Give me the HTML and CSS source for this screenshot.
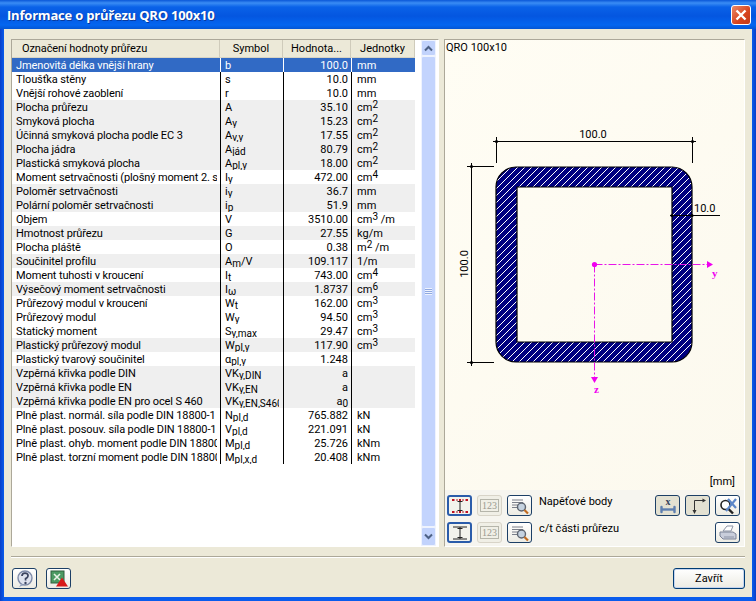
FILE: index.html
```html
<!DOCTYPE html>
<html lang="cs">
<head>
    <meta charset="UTF-8">
    <title>Informace o průřezu QRO 100x10</title>
    <link rel="stylesheet" href="styles.css">
</head>
<body>

<div class="window">
    <!-- Title bar -->
    <div class="titlebar">
        <span class="title">Informace o průřezu QRO 100x10</span>
        <span class="close">
            <svg width="12" height="12" viewBox="0 0 12 12"><path d="M1.5 1.5 L10.5 10.5 M10.5 1.5 L1.5 10.5" stroke="#fff" stroke-width="2.4" fill="none"/></svg>
        </span>
    </div>

    <div class="client">
        <div class="main">
            <!-- Values list -->
            <div class="list-panel">
                <div class="list">
                    <table class="values">
                        <colgroup><col class="c-name"><col class="c-sym"><col class="c-val"><col class="c-unit"></colgroup>
                        <thead>
                            <tr>
                                <th class="th-name">Označení hodnoty průřezu</th>
                                <th>Symbol</th>
                                <th>Hodnota...</th>
                                <th>Jednotky</th>
                            </tr>
                        </thead>
                        <tbody>
                            <tr class="selected"><td>Jmenovitá délka vnější hrany</td><td>b</td><td>100.0</td><td>mm</td></tr>
                            <tr><td>Tloušťka stěny</td><td>s</td><td>10.0</td><td>mm</td></tr>
                            <tr><td>Vnější rohové zaoblení</td><td>r</td><td>10.0</td><td>mm</td></tr>
                            <tr class="grey"><td>Plocha průřezu</td><td>A</td><td>35.10</td><td>cm<sup>2</sup></td></tr>
                            <tr class="grey"><td>Smyková plocha</td><td>A<sub>y</sub></td><td>15.23</td><td>cm<sup>2</sup></td></tr>
                            <tr class="grey"><td>Účinná smyková plocha podle EC 3</td><td>A<sub>v,y</sub></td><td>17.55</td><td>cm<sup>2</sup></td></tr>
                            <tr class="grey"><td>Plocha jádra</td><td>A<sub>jád</sub></td><td>80.79</td><td>cm<sup>2</sup></td></tr>
                            <tr class="grey"><td>Plastická smyková plocha</td><td>A<sub>pl,y</sub></td><td>18.00</td><td>cm<sup>2</sup></td></tr>
                            <tr><td>Moment setrvačnosti (plošný moment 2. stupně)</td><td>I<sub>y</sub></td><td>472.00</td><td>cm<sup>4</sup></td></tr>
                            <tr class="grey"><td>Poloměr setrvačnosti</td><td>i<sub>y</sub></td><td>36.7</td><td>mm</td></tr>
                            <tr class="grey"><td>Polární poloměr setrvačnosti</td><td>i<sub>p</sub></td><td>51.9</td><td>mm</td></tr>
                            <tr><td>Objem</td><td>V</td><td>3510.00</td><td>cm<sup>3</sup> /m</td></tr>
                            <tr class="grey"><td>Hmotnost průřezu</td><td>G</td><td>27.55</td><td>kg/m</td></tr>
                            <tr><td>Plocha pláště</td><td>O</td><td>0.38</td><td>m<sup>2</sup> /m</td></tr>
                            <tr class="grey"><td>Součinitel profilu</td><td>A<sub>m</sub>/V</td><td>109.117</td><td>1/m</td></tr>
                            <tr><td>Moment tuhosti v kroucení</td><td>I<sub>t</sub></td><td>743.00</td><td>cm<sup>4</sup></td></tr>
                            <tr class="grey"><td>Výsečový moment setrvačnosti</td><td>I<sub>ω</sub></td><td>1.8737</td><td>cm<sup>6</sup></td></tr>
                            <tr><td>Průřezový modul v kroucení</td><td>W<sub>t</sub></td><td>162.00</td><td>cm<sup>3</sup></td></tr>
                            <tr><td>Průřezový modul</td><td>W<sub>y</sub></td><td>94.50</td><td>cm<sup>3</sup></td></tr>
                            <tr><td>Statický moment</td><td>S<sub>y,max</sub></td><td>29.47</td><td>cm<sup>3</sup></td></tr>
                            <tr class="grey"><td>Plastický průřezový modul</td><td>W<sub>pl,y</sub></td><td>117.90</td><td>cm<sup>3</sup></td></tr>
                            <tr><td>Plastický tvarový součinitel</td><td>α<sub>pl,y</sub></td><td>1.248</td><td></td></tr>
                            <tr class="grey"><td>Vzpěrná křivka podle DIN</td><td>VK<sub>y,DIN</sub></td><td>a</td><td></td></tr>
                            <tr class="grey"><td>Vzpěrná křivka podle EN</td><td>VK<sub>y,EN</sub></td><td>a</td><td></td></tr>
                            <tr class="grey"><td>Vzpěrná křivka podle EN pro ocel S 460</td><td>VK<sub>y,EN,S460</sub></td><td>a<sub>0</sub></td><td></td></tr>
                            <tr><td>Plně plast. normál. síla podle DIN 18800-1</td><td>N<sub>pl,d</sub></td><td>765.882</td><td>kN</td></tr>
                            <tr><td>Plně plast. posouv. síla podle DIN 18800-1</td><td>V<sub>pl,d</sub></td><td>221.091</td><td>kN</td></tr>
                            <tr><td>Plně plast. ohyb. moment podle DIN 18800-1</td><td>M<sub>pl,d</sub></td><td>25.726</td><td>kNm</td></tr>
                            <tr><td>Plně plast. torzní moment podle DIN 18800-1</td><td>M<sub>pl,x,d</sub></td><td>20.408</td><td>kNm</td></tr>
                        </tbody>
                    </table>
                </div>
                <!-- Scrollbar -->
                <div class="scrollbar">
                    <div class="sb-btn">
                        <svg width="9" height="7" viewBox="0 0 9 7"><path d="M1 5.5 L4.5 2 L8 5.5" stroke="#4d6185" stroke-width="2" fill="none"/></svg>
                    </div>
                    <div class="sb-thumb"><span class="grip"></span></div>
                    <div class="sb-btn sb-down">
                        <svg width="9" height="7" viewBox="0 0 9 7"><path d="M1 1.5 L4.5 5 L8 1.5" stroke="#4d6185" stroke-width="2" fill="none"/></svg>
                    </div>
                </div>
            </div>

            <!-- Cross-section picture -->
            <div class="view-panel">
                <div class="canvas">
                    <svg class="drawing" width="300" height="450" viewBox="446 40 300 450">
                        <defs>
                            <pattern id="hatch" width="7" height="7" patternUnits="userSpaceOnUse">
                                <rect width="7" height="7" fill="#000080"/>
                                <path d="M-1.75 1.75 L1.75 -1.75 M0 7 L7 0 M5.25 8.75 L8.75 5.25" stroke="#fff" stroke-width="1"/>
                            </pattern>
                        </defs>
                        <path fill-rule="evenodd" fill="url(#hatch)" stroke="#000" stroke-width="1.2" d="M517 167 H673 A20 20 0 0 1 693 187 V342 A20 20 0 0 1 673 362 H517 A20 20 0 0 1 497 342 V187 A20 20 0 0 1 517 167 Z M518 187 V342 H673 V187 Z"/>
                        <g stroke="#000" stroke-width="1" fill="none">
                            <path d="M494 141.5 H697 M497.5 137 V163 M693.5 137 V163"/>
                            <path d="M472.5 163 V366 M468 166.5 H495 M468 362.5 H495"/>
                            <path d="M671 215.5 H721"/>
                        </g>
                        <g fill="#000">
                            <circle cx="497.5" cy="141.5" r="1.6"/>
                            <circle cx="693.5" cy="141.5" r="1.6"/>
                            <circle cx="472.5" cy="166.5" r="1.6"/>
                            <circle cx="472.5" cy="362.5" r="1.6"/>
                            <circle cx="673" cy="215.5" r="1.6"/>
                            <circle cx="693" cy="215.5" r="1.6"/>
                        </g>
                        <text class="dim" x="594" y="138" text-anchor="middle">100.0</text>
                        <text class="dim" x="695" y="212">10.0</text>
                        <text class="dim" transform="translate(469 264) rotate(-90)" text-anchor="middle">100.0</text>
                        <g stroke="#e815e8" stroke-width="1" fill="none" stroke-dasharray="8 2 2 2">
                            <path d="M595.5 264.5 H708"/>
                            <path d="M595.5 264.5 V378"/>
                        </g>
                        <g fill="#f000f0">
                            <circle cx="595.5" cy="264.5" r="2.6"/>
                            <path d="M708 261 L714 264.5 L708 268 Z"/>
                            <path d="M592 377 L595.5 383 L599 377 Z"/>
                        </g>
                        <text class="axis" x="713" y="277">y</text>
                        <text class="axis" x="595" y="393">z</text>
                    </svg>
                    <span class="section-name">QRO 100x10</span>
                    <span class="mm">[mm]</span>
                </div>

                <!-- Picture toolbar -->
                <div class="toolbar">
                    <div class="tool-row">
                        <button class="tool active">
                            <svg width="20" height="16" viewBox="0 0 20 16"><path d="M3 2 H17 M3 14 H17" stroke="#b01020" stroke-dasharray="2 1" fill="none"/><path d="M10 2 V14 M7.5 3.5 H12.5 M7.5 12.5 H12.5" stroke="#222" fill="none"/><g fill="#c01020"><rect x="2" y="1" width="2" height="2"/><rect x="9" y="1" width="2" height="2"/><rect x="16" y="1" width="2" height="2"/><rect x="2" y="13" width="2" height="2"/><rect x="9" y="13" width="2" height="2"/><rect x="16" y="13" width="2" height="2"/></g></svg>
                        </button>
                        <button class="tool off"><span class="num">123</span></button>
                        <button class="tool">
                            <svg width="20" height="18" viewBox="0 0 20 18"><path d="M2 3 H13 M2 5.5 H13 M2 8 H9 M2 10.5 H9" stroke="#7a7f8a" fill="none"/><circle cx="11.5" cy="10" r="4" fill="#c5d2e0" stroke="#5d6470" stroke-width="1.4"/><path d="M14.5 13 L18 16.5" stroke="#c06a20" stroke-width="2.2"/></svg>
                        </button>
                        <span class="tool-label">Napěťové body</span>
                        <button class="tool shade">
                            <svg width="20" height="18" viewBox="0 0 20 18"><path d="M4 12.5 H16" stroke="#5d7fb0" stroke-width="2.4"/><path d="M3.5 10 V15 M16.5 10 V15" stroke="#5d7fb0" stroke-width="2.4" stroke-linecap="round"/><text class="icon-x" x="10" y="8" text-anchor="middle">x</text></svg>
                        </button>
                        <button class="tool shade">
                            <svg width="20" height="18" viewBox="0 0 20 18"><path d="M6.5 16 V3.5 H17" stroke="#333" fill="none"/><path d="M14.5 1.5 L18 3.5 L14.5 5.5 Z M4.5 13 L6.5 17 L8.5 13 Z" fill="#333"/></svg>
                        </button>
                        <button class="tool">
                            <svg width="20" height="18" viewBox="0 0 20 18"><circle cx="7.5" cy="8" r="4.5" fill="#fff" stroke="#222" stroke-width="1.6"/><path d="M10.5 12 L15 16.5" stroke="#222" stroke-width="2.4"/><path d="M8 14 L18 2 M10 2 L18 11" stroke="#5b86c8" stroke-width="2.2"/></svg>
                        </button>
                    </div>
                    <div class="tool-row">
                        <button class="tool active">
                            <svg width="20" height="16" viewBox="0 0 20 16"><path d="M3 2 H17 M3 14 H17 M10 2 V14 M7.5 3.5 H12.5 M7.5 12.5 H12.5" stroke="#222" fill="none"/></svg>
                        </button>
                        <button class="tool off"><span class="num">123</span></button>
                        <button class="tool">
                            <svg width="20" height="18" viewBox="0 0 20 18"><path d="M2 3 H13 M2 5.5 H13 M2 8 H9 M2 10.5 H9" stroke="#7a7f8a" fill="none"/><circle cx="11.5" cy="10" r="4" fill="#c5d2e0" stroke="#5d6470" stroke-width="1.4"/><path d="M14.5 13 L18 16.5" stroke="#c06a20" stroke-width="2.2"/></svg>
                        </button>
                        <span class="tool-label">c/t části průřezu</span>
                        <button class="tool">
                            <svg width="20" height="18" viewBox="0 0 20 18"><path d="M5 7 L9 2 H15 L13 7 Z" fill="#fff" stroke="#8b93a5"/><path d="M2 8 H15 L18 10 V15 H5 L2 12 Z" fill="#c9cedb" stroke="#7b8296"/><path d="M6 13 H16" stroke="#8b93a5"/></svg>
                        </button>
                    </div>
                </div>
            </div>
        </div>

        <div class="separator"></div>

        <!-- Bottom buttons -->
        <div class="footer">
            <button class="tool">
                <svg width="20" height="18" viewBox="0 0 20 18"><circle cx="10" cy="8" r="7" fill="#dfe3ee" stroke="#7d8aa8" stroke-width="1.4"/><path d="M7 6 Q7 3.2 10 3.2 Q13.2 3.2 13 6 Q12.8 7.6 10.6 8.6 V10.5" stroke="#3c4560" stroke-width="1.8" fill="none"/><circle cx="10.5" cy="13" r="1.2" fill="#3c4560"/><path d="M6 14 L4 17 L9 15" fill="#9aa6c0"/></svg>
            </button>
            <button class="tool">
                <svg width="20" height="18" viewBox="0 0 20 18"><rect x="2" y="1" width="13" height="12" fill="#4c9a62" stroke="#2f5f3d"/><path d="M5 4 L11 10 M11 4 L5 10" stroke="#e9f2e6" stroke-width="1.6"/><path d="M13 7.5 L19 16.5 H7 Z" fill="#d81a1a"/></svg>
            </button>
            <button class="close-btn">Zavřít</button>
        </div>
    </div>
</div>

</body>
</html>
```
FILE: styles.css
```css
html, body {
    margin: 0;
    padding: 0;
}
body {
    font-family: Roboto, "Liberation Sans", Arial, sans-serif;
    font-size: 11px;
    color: #000;
    background: #0a50d8;
}
.window {
    width: 756px;
    height: 601px;
    display: flex;
    flex-direction: column;
    box-sizing: border-box;
    padding: 0 4px 4px 4px;
    background: linear-gradient(to right, #0a3fc8 0, #0a5cec 4px, #0a5cec 752px, #0a3fc8 756px);
    overflow: hidden;
}

/* title bar */
.titlebar {
    height: 29px;
    margin: 0 -4px;
    padding: 0 5px 0 7px;
    display: flex;
    align-items: center;
    justify-content: space-between;
    background: linear-gradient(to bottom, #0a57d8 0, #3a8cf4 3px, #0a62e8 7px, #0456e0 16px, #0466f0 25px, #0456d4 29px);
}
.title {
    font-family: "Open Sans", sans-serif;
    font-weight: bold;
    font-size: 13px;
    letter-spacing: -0.2px;
    color: #fff;
    text-shadow: 1px 1px 0 #0a3a9c;
}
.close {
    width: 20px;
    height: 20px;
    display: flex;
    align-items: center;
    justify-content: center;
    box-sizing: border-box;
    border: 1px solid #fff;
    border-radius: 3px;
    background: linear-gradient(135deg, #ec8a68, #d6431e 60%, #c23a1a);
}

/* dialog body */
.client {
    flex: 1;
    display: flex;
    flex-direction: column;
    background: #ece9d8;
    padding: 10px 7px 0 7px;
}
.main {
    display: flex;
    gap: 5px;
    height: 508px;
}
.list-panel {
    width: 428px;
    flex-shrink: 0;
    display: flex;
    box-sizing: border-box;
    border: 1px solid #aca899;
    border-right-color: #fff;
    border-bottom-color: #fff;
    background: #fff;
}
.list {
    width: 403px;
    flex-shrink: 0;
    overflow: hidden;
}

/* values table */
.values {
    width: 403px;
    table-layout: fixed;
    border-collapse: separate;
    border-spacing: 0;
}
.c-name { width: 208px; }
.c-sym { width: 63px; }
.c-val { width: 68px; }
.c-unit { width: 64px; }
.values th {
    height: 17px;
    padding: 0;
    font-weight: normal;
    text-align: center;
    background: #ece9d8;
    border-bottom: 1px solid #d8d4c4;
    border-right: 1px solid #cfcbbb;
    white-space: nowrap;
    overflow: hidden;
}
.values .th-name {
    text-align: left;
    padding-left: 10px;
    letter-spacing: -0.1px;
}
.values td {
    height: 13px;
    line-height: 13px;
    padding: 1px 0 0 4px;
    white-space: nowrap;
    overflow: hidden;
    border-left: 1px solid #000;
}
.values td:first-child {
    border-left: none;
    border-right: 3px solid transparent;
    letter-spacing: -0.12px;
}
.values td:nth-child(2) {
    border-right: 4px solid transparent;
}
.values td:nth-child(3) {
    text-align: right;
    padding: 1px 3px 0 0;
}
.values td:nth-child(4) {
    padding-left: 5px;
    overflow: visible;
}
.values sub, .values sup {
    font-size: 10px;
    line-height: 0;
}
.values sub {
    vertical-align: -2px;
}
.values sup {
    vertical-align: 3px;
}
.grey td {
    background: #efefef;
}
.selected td {
    background: #316ac5;
    color: #fff;
    border-left-color: #fff;
}

/* scrollbar */
.scrollbar {
    width: 15px;
    flex-shrink: 0;
    margin-left: 6px;
    display: flex;
    flex-direction: column;
    background: #f3f6fd;
}
.sb-btn {
    height: 16px;
    display: flex;
    align-items: center;
    justify-content: center;
    background: #c2d3fc;
    border: 1px solid #eef3fe;
    border-radius: 2px;
    box-sizing: border-box;
}
.sb-down {
    height: 19px;
}
.sb-thumb {
    flex: 1;
    display: flex;
    align-items: center;
    justify-content: center;
    background: #c3d4fd;
    border: 1px solid #eef3fe;
    border-radius: 2px;
}
.grip {
    width: 7px;
    height: 7px;
    background: repeating-linear-gradient(to bottom, #eef3fe 0, #eef3fe 1px, #8fa8e0 1px, #8fa8e0 2px);
}

/* picture panel */
.view-panel {
    flex: 1;
    display: flex;
    flex-direction: column;
    box-sizing: border-box;
    border: 1px solid #aca899;
    border-right-color: #fff;
    border-bottom-color: #fff;
}
.canvas {
    position: relative;
    height: 450px;
    background: linear-gradient(135deg, #fffdf4, #fcf9ee);
}
.drawing {
    position: absolute;
    left: 0;
    top: 0;
}
.dim {
    font-family: Roboto, sans-serif;
    font-size: 11px;
    fill: #000;
}
.axis {
    font-family: "Liberation Serif", serif;
    font-weight: bold;
    font-size: 11px;
    fill: #f000f0;
}
.icon-x {
    font-family: "Liberation Serif", serif;
    font-weight: bold;
    font-size: 10px;
    fill: #33405a;
}
.section-name {
    position: absolute;
    left: 1px;
    top: 1px;
}
.mm {
    position: absolute;
    right: 9px;
    bottom: 2px;
}
.toolbar {
    flex: 1;
    display: flex;
    flex-direction: column;
    gap: 6px;
    padding: 5px 4px 0 2px;
    background: #f6f5ef;
}
.tool-row {
    display: flex;
    gap: 5px;
    height: 21px;
}
.tool-label {
    flex: 1;
    margin-left: 2px;
    line-height: 13px;
}
.tool {
    width: 25px;
    height: 21px;
    padding: 0;
    display: flex;
    align-items: center;
    justify-content: center;
    box-sizing: border-box;
    border: 1px solid #1c3f66;
    border-radius: 3px;
    background: linear-gradient(to bottom, #fff, #ecebe3);
}
.tool.active {
    border: 2px solid #2a5caa;
    background: #f3f3ec;
}
.tool.shade {
    background: #e3e1d2;
}
.tool.off {
    border-color: #d8d4c8;
    background: #f0efe6;
}
.num {
    font-family: "Liberation Serif", serif;
    font-size: 10px;
    line-height: 11px;
    padding: 0 1px;
    color: #9a9a90;
    border: 1px solid #b5b5aa;
}

/* bottom part */
.separator {
    margin-top: 9px;
    height: 1px;
    background: #aca899;
    border-bottom: 1px solid #fff;
}
.footer {
    display: flex;
    align-items: flex-start;
    gap: 9px;
    padding: 10px 0 0 1px;
}
.close-btn {
    margin-left: auto;
    width: 72px;
    height: 21px;
    padding: 0;
    font-family: Roboto, Arial, sans-serif;
    font-size: 11px;
    border: 1px solid #003c74;
    border-radius: 3px;
    background: linear-gradient(to bottom, #fff, #ecebe3);
    box-shadow: inset 0 0 0 1px #c5d4ee;
}
```
